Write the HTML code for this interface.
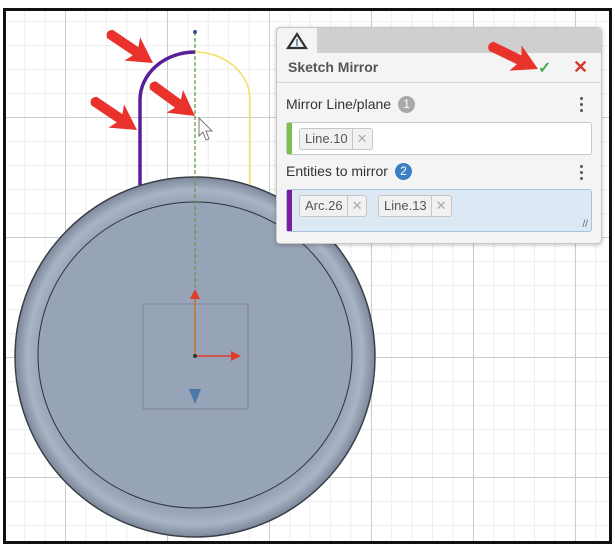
<!DOCTYPE html>
<html><head><style>
body{margin:0;width:615px;height:548px;background:#fff;overflow:hidden;font-family:"Liberation Sans",sans-serif;position:relative}
.frame{position:absolute;left:3px;top:8px;width:603px;height:530px;border:3px solid #111;overflow:hidden;
background-color:#fff;
background-image:
linear-gradient(#c9cdd2 1px,transparent 1px),
linear-gradient(90deg,#c9cdd2 1px,transparent 1px),
linear-gradient(#eceef0 1px,transparent 1px),
linear-gradient(90deg,#eceef0 1px,transparent 1px);
background-size:102px 120px,102px 120px,20.4px 24px,20.4px 24px;
background-position:59px 106px,59px 106px,59px 106px,59px 106px}
.panel{position:absolute;left:276px;top:27px;width:324px;height:215px;background:#f4f4f4;border:1px solid #c8c8c8;border-radius:4px;box-shadow:0 1px 4px rgba(0,0,0,.25)}
.tabbar{height:25px;background:#cfcfcf;border-radius:4px 4px 0 0;position:relative}
.tab{position:absolute;left:0;top:0;width:40px;height:25px;background:#f4f4f4;border-radius:4px 0 0 0}
.title{height:29px;border-bottom:1px solid #d6d6d6;font-weight:bold;color:#555;font-size:14px;line-height:29px;padding-left:11px;position:relative}
.lbl{position:absolute;font-size:14px;color:#333}
.badge{display:inline-block;width:17px;height:17px;border-radius:50%;color:#fff;font-size:12px;text-align:center;line-height:17px;margin-left:7px;vertical-align:1px}
.box{position:absolute;left:9px;width:304px;border:1px solid #c8c8c8;border-radius:3px;background:#fff}
.bar{position:absolute;left:0;top:0;bottom:0;width:5px}
.chip{position:absolute;top:5px;height:20px;border:1px solid #c6c6c6;border-radius:3px;background:#f1f1f1;font-size:13px;color:#555;line-height:20px}
.chip span{padding:0 4px 0 5px;border-right:1px solid #c6c6c6;display:inline-block}
.chip i{font-style:normal;color:#aaa;padding:0 4px;font-size:13px}
.dots{position:absolute;right:18px;width:3px}
.dots b{display:block;width:3px;height:3px;border-radius:50%;background:#555;margin-bottom:3px}
</style></head><body>
<div class="frame"></div>
<svg width="615" height="548" style="position:absolute;left:0;top:0">
<defs><radialGradient id="g" cx="50%" cy="50%" r="50%"><stop offset="0.86" stop-color="#97a3b6"/><stop offset="0.93" stop-color="#a9b4c5"/><stop offset="1" stop-color="#7c879a"/></radialGradient>
<path id="arr" d="M0,0 L-25,-14 L-21,-5 L-52,-5 Q-58,0 -52,5 L-21,5 L-25,14 Z" fill="#e8322b"/></defs>
<ellipse cx="195" cy="357" rx="180" ry="180" fill="url(#g)" stroke="#3a3f48" stroke-width="1.5"/>
<ellipse cx="195" cy="355" rx="157" ry="153" fill="#97a3b6" stroke="#2e333b" stroke-width="1"/>
<rect x="143" y="304" width="105" height="105" fill="none" stroke="#7d8799" stroke-width="1"/>
<line x1="195" y1="32" x2="195" y2="290" stroke="#6a9a4a" stroke-width="1.3" stroke-dasharray="4,2"/>
<circle cx="195" cy="32" r="2" fill="#35528a"/>
<path d="M140,185 L140,100 A55,48 0 0 1 195,52" fill="none" stroke="#5a1e9a" stroke-width="3.5"/>
<path d="M195,52 A55,48 0 0 1 250,100 L250,185" fill="none" stroke="#f0e060" stroke-width="1.5"/>
<line x1="195" y1="356" x2="195" y2="298" stroke="#c07828" stroke-width="1.5"/>
<path d="M190,299 L195,289 L200,299z" fill="#e03a2a"/>
<line x1="195" y1="356" x2="232" y2="356" stroke="#e03a2a" stroke-width="1.5"/>
<path d="M231,351 L241,356 L231,361z" fill="#e03a2a"/>
<circle cx="195" cy="356" r="2" fill="#333"/>
<path d="M189,389 L201,389 L195,404z" fill="#4a78a8"/>
<path d="M199,118 L199,136 L203,132 L206,140 L209,139 L206,131 L212,131z" fill="#fff" stroke="#777" stroke-width="1"/>
</svg>
<div class="panel">
<div class="tabbar"><div class="tab">
<svg width="40" height="25"><path d="M11,20 L20,6 L29,20z" fill="none" stroke="#333" stroke-width="2.2"/><line x1="20" y1="11" x2="20" y2="18" stroke="#4a78a8" stroke-width="1.5"/></svg></div></div>
<div class="title">Sketch Mirror
<span style="position:absolute;left:261px;top:1px;color:#4caf50;font-size:16px">✓</span>
<span style="position:absolute;left:296px;top:0;color:#d63a2f;font-size:18px;font-weight:bold">✕</span></div>
<div class="lbl" style="left:9px;top:68px">Mirror Line/plane<span class="badge" style="background:#a9a9a9">1</span></div>
<div class="dots" style="top:69px"><b></b><b></b><b></b></div>
<div class="box" style="top:94px;height:31px"><div class="bar" style="background:#7cbf4a"></div>
<div class="chip" style="left:12px"><span>Line.10</span><i>✕</i></div></div>
<div class="lbl" style="left:9px;top:135px">Entities to mirror<span class="badge" style="background:#3d7fc4">2</span></div>
<div class="dots" style="top:137px"><b></b><b></b><b></b></div>
<div class="box" style="top:161px;height:41px;background:#dce8f4;border-color:#a8c2dc"><div class="bar" style="background:#7a1ea0"></div>
<div class="chip" style="left:12px"><span>Arc.26</span><i>✕</i></div>
<div class="chip" style="left:91px"><span>Line.13</span><i>✕</i></div>
<span style="position:absolute;right:3px;bottom:1px;font-size:10px;color:#666">//</span></div>
</div>
<svg width="615" height="548" style="position:absolute;left:0;top:0">
<use href="#arr" transform="translate(153,63) rotate(34)"/>
<use href="#arr" transform="translate(195,116) rotate(36)"/>
<use href="#arr" transform="translate(137,130) rotate(34)"/>
<use href="#arr" transform="translate(538,69) rotate(26)"/>
</svg>
</body></html>
